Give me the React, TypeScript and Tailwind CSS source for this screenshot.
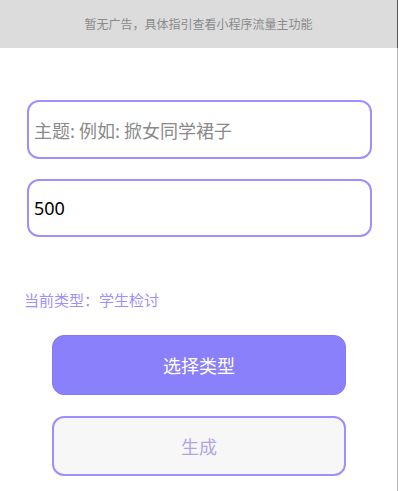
import React from "react";

export default function App() {
  return (
    <div className="flex w-[400px] h-[491px] bg-white overflow-hidden" style={{ fontFamily: '"Noto Sans CJK SC", "Noto Sans", sans-serif' }}>
      <div className="flex flex-col w-[397px]">
        <div className="h-[48px] bg-[#dcdcdc] flex items-center justify-center text-[12px] text-[#8a8a8a]">
          暂无广告，具体指引查看小程序流量主功能
        </div>
        <div className="flex flex-col pl-[27px] pr-[25px] pt-[52px]">
          <input
            className="h-[59px] w-full rounded-[12px] border-2 border-[#9d8fff] px-[5px] text-[18px] text-black outline-none placeholder:text-[#8a8a8a]"
            placeholder="主题: 例如: 掀女同学裙子"
          />
          <input
            className="mt-[20px] h-[58px] w-full rounded-[12px] border-2 border-[#9d8fff] px-[5px] text-[18px] text-black outline-none"
            defaultValue="500"
            style={{ fontFamily: '"Noto Sans", "Noto Sans CJK SC", sans-serif' }}
          />
        </div>
        <div className="mt-[52px] pl-[24px] text-[15px] leading-[22px] text-[#9d8fff]">当前类型：学生检讨</div>
        <div className="flex flex-col items-start pl-[52px] pt-[24px]">
          <button className="h-[60px] w-[294px] rounded-[12px] border border-[#8479f0] bg-[#8b80fb] text-[18px] text-white">
            选择类型
          </button>
          <button className="mt-[21px] h-[60px] w-[294px] rounded-[12px] border-2 border-[#9d8fff] bg-[#f7f7f7] text-[18px] text-[#b3a3e6]">
            生成
          </button>
        </div>
      </div>
      <div className="flex flex-col w-px">
        <div className="h-[48px] bg-[#555]" />
        <div className="flex-1 bg-[#b5b5b5]" />
      </div>
      <div className="w-[2px] bg-white" />
    </div>
  );
}
